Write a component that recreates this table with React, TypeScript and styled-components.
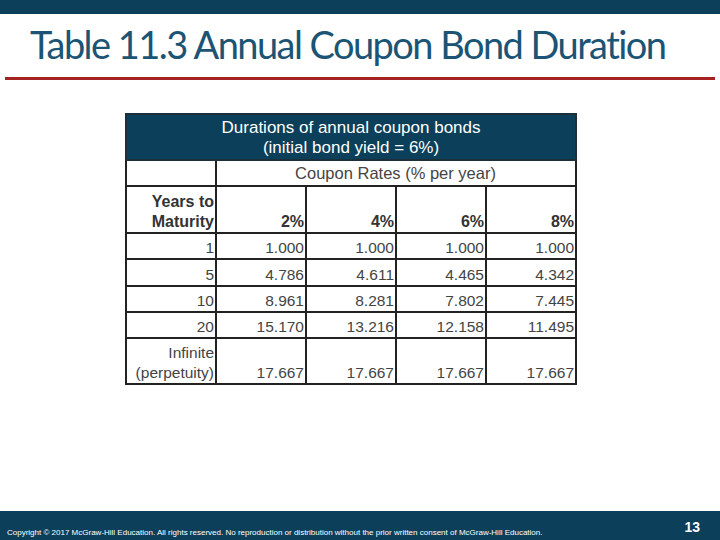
import React from "react";
import styled, { createGlobalStyle } from "styled-components";

const Global = createGlobalStyle`
  html, body { margin: 0; padding: 0; background: #fff; }
  body { width: 720px; height: 540px; overflow: hidden; font-family: "Liberation Sans", Arial, sans-serif; }
`;

const Slide = styled.div`
  width: 720px;
  height: 540px;
  display: flex;
  flex-direction: column;
  background: #fff;
`;

const TopBar = styled.div`
  height: 14px;
  background: #0c3f5a;
  flex: none;
`;

const Title = styled.h1`
  margin: 0;
  padding: 4px 0 0 30px;
  height: 59px;
  box-sizing: border-box;
  font-family: Lato, "Open Sans", sans-serif;
  font-weight: 400;
  font-size: 38px;
  line-height: 52px;
  color: #1b5474;
  letter-spacing: -1.55px;
  white-space: nowrap;
  flex: none;
`;

const Rule = styled.div`
  margin: 4px 5px 0 5px;
  height: 3px;
  background: #a52222;
  flex: none;
`;

const TableArea = styled.div`
  padding: 33px 0 0 125px;
  flex: 1;
`;

const Grid = styled.table`
  border-collapse: collapse;
  table-layout: fixed;
  width: 452px;
  font-family: "Liberation Sans", Arial, sans-serif;
  color: #1a1a1a;
`;

const Col = styled.col`
  width: 90px;
`;

const HeaderCell = styled.th`
  background: #0c3f5a;
  color: #fff;
  font-weight: 400;
  font-size: 17px;
  line-height: 20px;
  height: 46px;
  padding: 3px 0 0 0;
  border: 2px solid #1d2f3a;
  vertical-align: top;
  box-sizing: border-box;
`;

const Cell = styled.td<{ $h: number; $align?: string; $bold?: boolean; $size?: number }>`
  border: 2px solid #222;
  height: ${(p) => p.$h}px;
  box-sizing: border-box;
  padding: 0 1px 0 0;
  text-align: ${(p) => p.$align || "right"};
  vertical-align: ${(p) => (p.$align === "center" ? "middle" : "bottom")};
  font-size: ${(p) => p.$size || (p.$bold ? 16 : 15.5)}px;
  line-height: 20px;
  font-weight: ${(p) => (p.$bold ? 700 : 400)};
  color: ${(p) => (p.$bold ? "#333" : "#444")};
  white-space: nowrap;
`;

const Spacer = styled.div`
  flex: 1;
`;

const Footer = styled.div`
  height: 29px;
  background: #0c3f5a;
  display: flex;
  align-items: center;
  justify-content: space-between;
  padding: 0 20px 0 7px;
  color: #fff;
  flex: none;
`;

const Copy = styled.span`
  font-size: 8px;
  letter-spacing: 0;
  padding-top: 13px;
`;

const PageNo = styled.span`
  font-weight: 700;
  font-size: 14px;
  padding-top: 2px;
`;

const rows: [string, string[], number][] = [
  ["1", ["1.000", "1.000", "1.000", "1.000"], 26],
  ["5", ["4.786", "4.611", "4.465", "4.342"], 27],
  ["10", ["8.961", "8.281", "7.802", "7.445"], 26],
  ["20", ["15.170", "13.216", "12.158", "11.495"], 26],
];

export default function App() {
  return (
    <Slide>
      <Global />
      <TopBar />
      <Title>Table 11.3 Annual Coupon Bond Duration</Title>
      <Rule />
      <TableArea>
        <Grid>
          <colgroup>
            <Col />
            <Col />
            <Col />
            <Col />
            <Col />
          </colgroup>
          <tbody>
            <tr>
              <HeaderCell colSpan={5}>
                Durations of annual coupon bonds
                <br />
                (initial bond yield = 6%)
              </HeaderCell>
            </tr>
            <tr>
              <Cell $h={26} />
              <Cell $h={26} colSpan={4} $align="center" $size={16.5}>
                Coupon Rates (% per year)
              </Cell>
            </tr>
            <tr>
              <Cell $h={47} $bold>
                Years to
                <br />
                Maturity
              </Cell>
              <Cell $h={47} $bold>2%</Cell>
              <Cell $h={47} $bold>4%</Cell>
              <Cell $h={47} $bold>6%</Cell>
              <Cell $h={47} $bold>8%</Cell>
            </tr>
            {rows.map(([y, vals, h]) => (
              <tr key={y}>
                <Cell $h={h}>{y}</Cell>
                {vals.map((v, i) => (
                  <Cell $h={h} key={i}>
                    {v}
                  </Cell>
                ))}
              </tr>
            ))}
            <tr>
              <Cell $h={46}>
                Infinite
                <br />
                (perpetuity)
              </Cell>
              <Cell $h={46}>17.667</Cell>
              <Cell $h={46}>17.667</Cell>
              <Cell $h={46}>17.667</Cell>
              <Cell $h={46}>17.667</Cell>
            </tr>
          </tbody>
        </Grid>
      </TableArea>
      <Spacer />
      <Footer>
        <Copy>
          Copyright © 2017 McGraw-Hill Education. All rights reserved. No reproduction or distribution without the prior written consent of McGraw-Hill Education.
        </Copy>
        <PageNo>13</PageNo>
      </Footer>
    </Slide>
  );
}
